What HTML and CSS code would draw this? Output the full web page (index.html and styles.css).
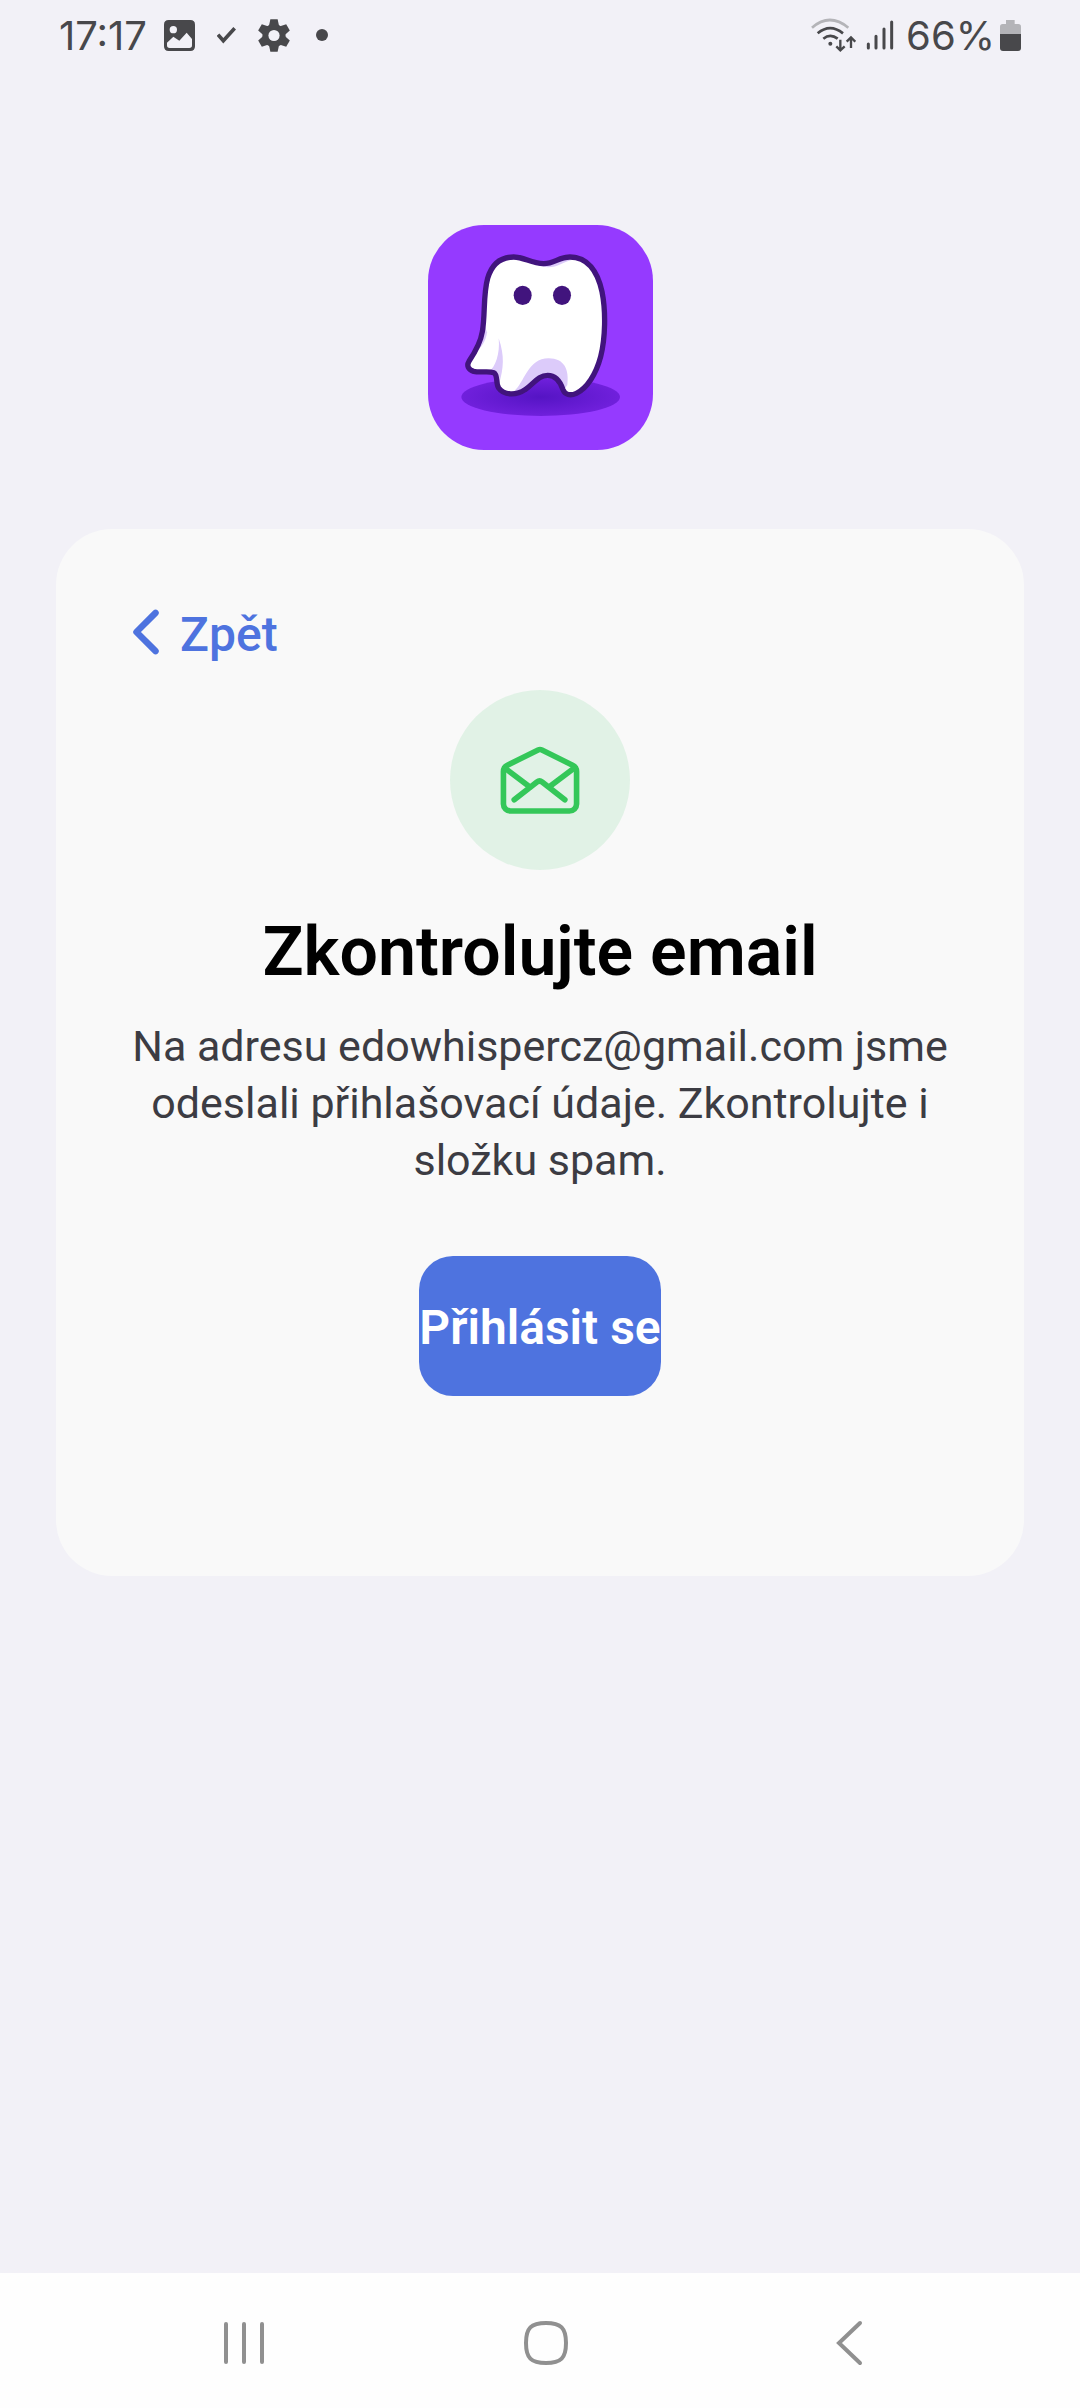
FILE: index.html
```html
<!DOCTYPE html>
<html lang="cs">
<head>
    <meta charset="UTF-8">
    <meta name="viewport" content="width=device-width, initial-scale=1.0">
    <title>Zkontrolujte email</title>
    <link rel="stylesheet" href="styles.css">
</head>
<body>
    <header class="status-bar">
        <div class="status-left">
            <span class="clock">17:17</span>
            <svg class="icon-image" width="31" height="31" viewBox="375 60 93 93">
                <path fill="#48484b" fill-rule="evenodd" d="M389 60H454Q468 60 468 74V139Q468 153 454 153H389Q375 153 375 139V74Q375 60 389 60ZM403 78A11 11 0 1 0 403 100A11 11 0 1 0 403 78ZM384 128V136Q384 144 392 144H451Q459 144 459 136V117L443 98L421 122L403 110Z"/>
            </svg>
            <svg class="icon-check" width="19" height="17" viewBox="534 84 57 51">
                <path fill="none" stroke="#48484b" stroke-width="11" d="M537 107L553 125L587 88"/>
            </svg>
            <svg class="icon-gear" width="32" height="33" viewBox="-48 -50 96 100">
                <g fill="#48484b">
                    <circle r="35"/>
                    <path id="tooth" d="M-15 -30L-11 -49H11L15 -30L15 30L11 49H-11L-15 30Z"/>
                    <use href="#tooth" transform="rotate(60)"/>
                    <use href="#tooth" transform="rotate(120)"/>
                </g>
                <circle r="17" fill="#f2f1f7"/>
            </svg>
            <span class="dot"></span>
        </div>
        <div class="status-right">
            <svg width="45" height="34" viewBox="70 53 135 102" fill="none" stroke="#48484b" stroke-width="8">
                <path stroke="#b4b4b8" d="M73 82Q126 36 182 82"/>
                <path d="M90 99Q127 68 166 99"/>
                <path d="M107 115Q128 98 150 115"/>
                <circle cx="128" cy="130" r="6" fill="#48484b" stroke="none"/>
                <path stroke-width="7" d="M158 118V149M146 138L158 150L171 138M190 143V112M177 124L190 111L203 124"/>
            </svg>
            <svg class="icon-signal" width="28" height="30" viewBox="233 59 84 90" stroke="#48484b" stroke-width="9" stroke-linecap="round">
                <path d="M240 131V143M263 108V143M287 86V143M310 65V143"/>
            </svg>
            <span class="battery-text">66%</span>
            <svg width="21" height="31" viewBox="630 58 63 93">
                <path fill="#b4b4b8" d="M648 58H674V70H685Q693 70 693 78V102H630V78Q630 70 638 70H648Z"/>
                <path fill="#48484b" d="M630 100H693V142Q693 151 684 151H639Q630 151 630 142Z"/>
            </svg>
        </div>
    </header>

    <main class="screen">
        <svg class="logo" viewBox="21 30 675 675" role="img" aria-label="Logo">
            <defs>
                <radialGradient id="shadow">
                    <stop offset="0" stop-color="#5514c4"/>
                    <stop offset="1" stop-color="#7020dc"/>
                </radialGradient>
                <clipPath id="body-clip">
                    <path d="M278 126C310 126 330 146 368 146C402 146 412 126 447 126C500 126 530 170 543 230C555 290 553 370 539 425C525 478 498 520 466 535C448 543 432 540 426 524C418 500 406 481 380 481C350 481 338 508 312 524C286 542 248 541 233 519C223 504 232 480 218 473C202 467 178 474 158 469C142 464 136 452 144 439C160 415 179 382 184 350C193 300 186 240 200 190C212 148 238 126 278 126Z"/>
                </clipPath>
            </defs>
            <rect x="21" y="30" width="675" height="675" fill="#953aff"/>
            <ellipse cx="359" cy="546" rx="238" ry="57" fill="url(#shadow)"/>
            <g clip-path="url(#body-clip)">
                <rect x="120" y="110" width="450" height="450" fill="#fff"/>
                <path fill="#dccbfa" d="M233 370C252 425 247 460 235 505L205 470C222 456 238 418 233 370Z"/>
                <path fill="#dccbfa" d="M184 310L198 352C196 375 180 400 164 412Z"/>
                <path fill="#dccbfa" d="M278 530C310 505 320 430 383 430C430 430 445 464 439 510L425 530L400 495H360L310 540Z"/>
                <path fill="#dccbfa" d="M350 151C400 168 420 142 454 134L420 125Z"/>
            </g>
            <path fill="none" stroke="#41147d" stroke-width="16" d="M278 126C310 126 330 146 368 146C402 146 412 126 447 126C500 126 530 170 543 230C555 290 553 370 539 425C525 478 498 520 466 535C448 543 432 540 426 524C418 500 406 481 380 481C350 481 338 508 312 524C286 542 248 541 233 519C223 504 232 480 218 473C202 467 178 474 158 469C142 464 136 452 144 439C160 415 179 382 184 350C193 300 186 240 200 190C212 148 238 126 278 126Z"/>
            <ellipse cx="305" cy="241" rx="27" ry="29" fill="#41147d"/>
            <ellipse cx="423" cy="241" rx="27" ry="29" fill="#41147d"/>
        </svg>

        <section class="card">
            <button type="button" class="back-button">
                <svg width="68" height="68" viewBox="0 0 512 512">
                    <path fill="none" stroke="currentColor" stroke-linecap="round" stroke-linejoin="round" stroke-width="48" d="M328 112L184 256L328 400"/>
                </svg>
                <span>Zpět</span>
            </button>

            <div class="mail-badge">
                <svg width="90" height="90" viewBox="0 0 512 512" fill="none" stroke="currentColor" stroke-width="32" stroke-linecap="round" stroke-linejoin="round">
                    <path d="M441.6 171.61L266.87 85.37a24.57 24.57 0 00-21.74 0L70.4 171.61A40 40 0 0048 207.39V392c0 22.09 18.14 40 40.52 40h335c22.38 0 40.52-17.91 40.52-40V207.39a40 40 0 00-22.44-35.78z"/>
                    <path d="M397.33 368L268.07 267.46a24 24 0 00-29.47 0L109.33 368M309.33 295l136-103M61.33 192l139 105"/>
                </svg>
            </div>

            <h1>Zkontrolujte email</h1>
            <p>Na adresu edowhispercz@gmail.com jsme odeslali přihlašovací údaje. Zkontrolujte i složku spam.</p>
            <button type="button" class="login-button">Přihlásit se</button>
        </section>
    </main>

    <nav class="nav-bar">
        <button type="button" aria-label="Poslední aplikace">
            <svg width="46" height="46" viewBox="0 0 46 46"><path d="M5 4V42M23 4V42M41 4V42"/></svg>
        </button>
        <button type="button" aria-label="Domů">
            <svg width="46" height="46" viewBox="0 0 46 46"><path d="M23 3C38 3 43 8 43 23S38 43 23 43S3 38 3 23S8 3 23 3Z"/></svg>
        </button>
        <button type="button" aria-label="Zpět">
            <svg width="46" height="46" viewBox="0 0 46 46"><path d="M34 3L13 23L34 43"/></svg>
        </button>
    </nav>
</body>
</html>
```
FILE: styles.css
```css
* {
    box-sizing: border-box;
}

body {
    margin: 0;
    min-height: 100vh;
    display: flex;
    flex-direction: column;
    background: #f2f1f7;
    font-family: Roboto, "Liberation Sans", sans-serif;
}

button {
    padding: 0;
    border: none;
    background: none;
    font-family: inherit;
    cursor: pointer;
}

svg {
    display: block;
    flex: none;
}

/* status bar */
.status-bar {
    height: 70px;
    padding: 0 59px;
    display: flex;
    justify-content: space-between;
    align-items: center;
    color: #48484b;
    font-family: Inter, sans-serif;
    font-size: 40px;
}

.status-left,
.status-right {
    display: flex;
    align-items: center;
}

.clock {
    margin-right: 17px;
}

.icon-check {
    margin: 0 22px;
}

.dot {
    width: 12px;
    height: 12px;
    margin-left: 26px;
    border-radius: 50%;
    background: #48484b;
}

.icon-signal {
    margin: 0 12px 0 10px;
}

.battery-text {
    margin-right: 5px;
}

/* content */
.screen {
    flex: 1;
    padding: 155px 56px 56px;
    display: flex;
    flex-direction: column;
    align-items: center;
}

.logo {
    width: 225px;
    height: 225px;
    border-radius: 56px;
}

.card {
    width: 100%;
    margin-top: 79px;
    padding: 69px 56px 180px;
    display: flex;
    flex-direction: column;
    align-items: center;
    border-radius: 56px;
    background: #f9f9f9;
}

.back-button {
    align-self: flex-start;
    display: flex;
    align-items: center;
    color: #4e73df;
    font-size: 48px;
    font-weight: 500;
    line-height: 57px;
}

.back-button span {
    padding-top: 4px;
}

.mail-badge {
    width: 180px;
    height: 180px;
    margin-top: 24px;
    display: flex;
    justify-content: center;
    align-items: center;
    border-radius: 50%;
    background: #e1f2e6;
    color: #34c759;
}

h1 {
    margin: 42px 0 0;
    color: #000;
    font-size: 68px;
    font-weight: 600;
    line-height: 80px;
    text-align: center;
}

p {
    margin: 26px 0 0;
    color: #3c3c43;
    font-size: 43px;
    line-height: 57px;
    text-align: center;
}

.login-button {
    height: 140px;
    margin-top: 67px;
    padding-top: 2px;
    border-radius: 34px;
    background: #4e73df;
    color: #fff;
    font-size: 48px;
    font-weight: 600;
}

/* system navigation */
.nav-bar {
    height: 135px;
    padding: 5px 80px 0 93px;
    display: grid;
    grid-template-columns: repeat(3, 1fr);
    justify-items: center;
    align-items: center;
    background: #fefefe;
}

.nav-bar path {
    fill: none;
    stroke: #909090;
    stroke-width: 4px;
    stroke-linecap: round;
}
```
